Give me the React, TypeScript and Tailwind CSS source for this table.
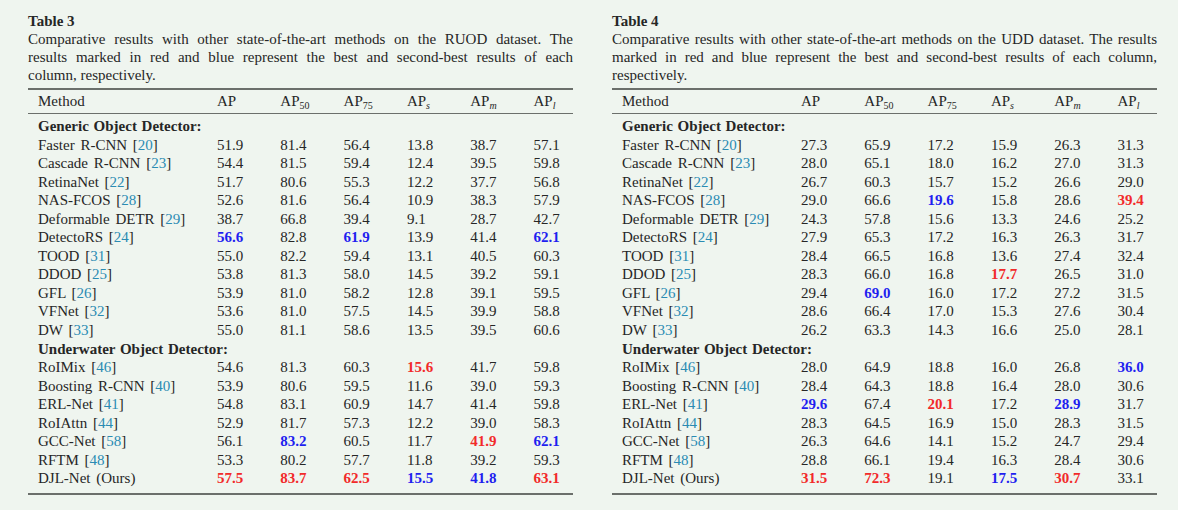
import React from 'react'

type Row = { name: string; ref?: string; vals: string[] }
type Section = { title: string; rows: Row[] }

const generic = (v: string[][]): Row[] => {
  const names: [string, string][] = [
    ['Faster R-CNN', '20'],
    ['Cascade R-CNN', '23'],
    ['RetinaNet', '22'],
    ['NAS-FCOS', '28'],
    ['Deformable DETR', '29'],
    ['DetectoRS', '24'],
    ['TOOD', '31'],
    ['DDOD', '25'],
    ['GFL', '26'],
    ['VFNet', '32'],
    ['DW', '33'],
  ]
  return names.map(([name, ref], i) => ({ name, ref, vals: v[i] }))
}

const underwater = (v: string[][]): Row[] => {
  const names: [string, string | undefined][] = [
    ['RoIMix', '46'],
    ['Boosting R-CNN', '40'],
    ['ERL-Net', '41'],
    ['RoIAttn', '44'],
    ['GCC-Net', '58'],
    ['RFTM', '48'],
    ['DJL-Net (Ours)', undefined],
  ]
  return names.map(([name, ref], i) => ({ name, ref, vals: v[i] }))
}

const ruod: Section[] = [
  {
    title: 'Generic Object Detector:',
    rows: generic([
      ['51.9', '81.4', '56.4', '13.8', '38.7', '57.1'],
      ['54.4', '81.5', '59.4', '12.4', '39.5', '59.8'],
      ['51.7', '80.6', '55.3', '12.2', '37.7', '56.8'],
      ['52.6', '81.6', '56.4', '10.9', '38.3', '57.9'],
      ['38.7', '66.8', '39.4', '9.1', '28.7', '42.7'],
      ['56.6b', '82.8', '61.9b', '13.9', '41.4', '62.1b'],
      ['55.0', '82.2', '59.4', '13.1', '40.5', '60.3'],
      ['53.8', '81.3', '58.0', '14.5', '39.2', '59.1'],
      ['53.9', '81.0', '58.2', '12.8', '39.1', '59.5'],
      ['53.6', '81.0', '57.5', '14.5', '39.9', '58.8'],
      ['55.0', '81.1', '58.6', '13.5', '39.5', '60.6'],
    ]),
  },
  {
    title: 'Underwater Object Detector:',
    rows: underwater([
      ['54.6', '81.3', '60.3', '15.6r', '41.7', '59.8'],
      ['53.9', '80.6', '59.5', '11.6', '39.0', '59.3'],
      ['54.8', '83.1', '60.9', '14.7', '41.4', '59.8'],
      ['52.9', '81.7', '57.3', '12.2', '39.0', '58.3'],
      ['56.1', '83.2b', '60.5', '11.7', '41.9r', '62.1b'],
      ['53.3', '80.2', '57.7', '11.8', '39.2', '59.3'],
      ['57.5r', '83.7r', '62.5r', '15.5b', '41.8b', '63.1r'],
    ]),
  },
]

const udd: Section[] = [
  {
    title: 'Generic Object Detector:',
    rows: generic([
      ['27.3', '65.9', '17.2', '15.9', '26.3', '31.3'],
      ['28.0', '65.1', '18.0', '16.2', '27.0', '31.3'],
      ['26.7', '60.3', '15.7', '15.2', '26.6', '29.0'],
      ['29.0', '66.6', '19.6b', '15.8', '28.6', '39.4r'],
      ['24.3', '57.8', '15.6', '13.3', '24.6', '25.2'],
      ['27.9', '65.3', '17.2', '16.3', '26.3', '31.7'],
      ['28.4', '66.5', '16.8', '13.6', '27.4', '32.4'],
      ['28.3', '66.0', '16.8', '17.7r', '26.5', '31.0'],
      ['29.4', '69.0b', '16.0', '17.2', '27.2', '31.5'],
      ['28.6', '66.4', '17.0', '15.3', '27.6', '30.4'],
      ['26.2', '63.3', '14.3', '16.6', '25.0', '28.1'],
    ]),
  },
  {
    title: 'Underwater Object Detector:',
    rows: underwater([
      ['28.0', '64.9', '18.8', '16.0', '26.8', '36.0b'],
      ['28.4', '64.3', '18.8', '16.4', '28.0', '30.6'],
      ['29.6b', '67.4', '20.1r', '17.2', '28.9b', '31.7'],
      ['28.3', '64.5', '16.9', '15.0', '28.3', '31.5'],
      ['26.3', '64.6', '14.1', '15.2', '24.7', '29.4'],
      ['28.8', '66.1', '19.4', '16.3', '28.4', '30.6'],
      ['31.5r', '72.3r', '19.1', '17.5b', '30.7r', '33.1'],
    ]),
  },
]

const grid = 'grid grid-cols-[189px_63.3px_63.3px_63.3px_63.3px_63.3px_1fr]'

function Cell({ v }: { v: string }) {
  if (v.endsWith('r')) return <span className="font-bold text-[#f22a2a]">{v.slice(0, -1)}</span>
  if (v.endsWith('b')) return <span className="font-bold text-[#1f1ff0]">{v.slice(0, -1)}</span>
  return <span>{v}</span>
}

function Ap({ sub, italic }: { sub?: string; italic?: boolean }) {
  return (
    <span>
      AP
      {sub && <sub className={`text-[10px] ${italic ? 'italic' : ''}`}>{sub}</sub>}
    </span>
  )
}

function ResultTable({ label, lines, sections }: { label: string; lines: string[]; sections: Section[] }) {
  return (
    <div className="w-[545px]">
      <div className="font-bold leading-[18px]">{label}</div>
      {lines.map((l, i) => (
        <div
          key={i}
          className={`leading-[18px] whitespace-nowrap ${i < lines.length - 1 ? 'text-justify [text-align-last:justify]' : ''}`}
        >
          {l}
        </div>
      ))}
      <div className="mt-[4px] border-t-2 border-b-2 border-[#6b6f6b]">
        <div className={`${grid} h-[24px] items-center border-b-[1.5px] border-[#6b6f6b]`}>
          <div className="pl-[10px]">Method</div>
          <Ap />
          <Ap sub="50" />
          <Ap sub="75" />
          <Ap sub="s" italic />
          <Ap sub="m" italic />
          <Ap sub="l" italic />
        </div>
        <div className="pt-[3px] pb-[5px]">
          {sections.map((s) => (
            <React.Fragment key={s.title}>
              <div className="pl-[10px] font-bold leading-[18.56px] h-[18.56px] [word-spacing:1px]">{s.title}</div>
              {s.rows.map((r) => (
                <div key={r.name} className={`${grid} leading-[18.56px] h-[18.56px]`}>
                  <div className="pl-[10px] [word-spacing:2px]">
                    {r.name}
                    {r.ref && (
                      <>
                        {' '}[<span className="text-[#2a8bb3]">{r.ref}</span>]
                      </>
                    )}
                  </div>
                  {r.vals.map((v, i) => (
                    <Cell key={i} v={v} />
                  ))}
                </div>
              ))}
            </React.Fragment>
          ))}
        </div>
      </div>
    </div>
  )
}

export default function App() {
  return (
    <div className="w-[1178px] h-[510px] bg-[#eff5ef] text-[#262626] text-[15px] font-['Liberation_Serif',serif] pl-[28px] pt-[12px] flex gap-[39px]">
      <ResultTable
        label="Table 3"
        lines={[
          'Comparative results with other state-of-the-art methods on the RUOD dataset. The',
          'results marked in red and blue represent the best and second-best results of each',
          'column, respectively.',
        ]}
        sections={ruod}
      />
      <ResultTable
        label="Table 4"
        lines={[
          'Comparative results with other state-of-the-art methods on the UDD dataset. The results',
          'marked in red and blue represent the best and second-best results of each column,',
          'respectively.',
        ]}
        sections={udd}
      />
    </div>
  )
}
